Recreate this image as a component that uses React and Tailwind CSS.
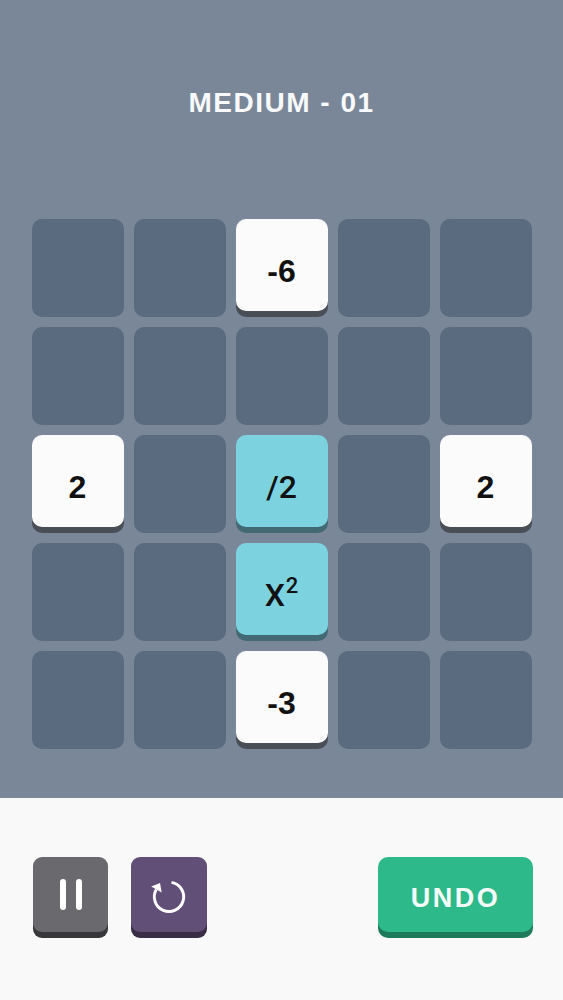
const cells = [
  [null, null, { t: "-6", k: "w" }, null, null],
  [null, null, null, null, null],
  [{ t: "2", k: "w" }, null, { t: "/2", k: "c" }, null, { t: "2", k: "w" }],
  [null, null, { t: "sq", k: "c" }, null, null],
  [null, null, { t: "-3", k: "w" }, null, null],
];

function Tile({ cell }) {
  if (!cell) {
    return <div className="h-[98px] w-[92px] rounded-[10px] bg-[#5a6a7f]" />;
  }
  const face =
    cell.k === "w"
      ? "bg-[#fbfbfc] shadow-[0_6px_0_#4a4e57] font-bold text-[32px]"
      : "bg-[#7dd2df] shadow-[0_6px_0_#436a74] font-medium text-[32px]";
  return (
    <div className="h-[98px] w-[92px]">
      <div
        className={`flex h-[92px] w-[92px] items-center justify-center rounded-[10px] pt-[12px] leading-none text-[#111] ${face}`}
        style={cell.k === "c" ? { fontFamily: 'Roboto, "Liberation Sans", sans-serif' } : undefined}
      >
        {cell.t === "sq" ? (
          <span className="flex items-start leading-none">
            <span className="text-[32px]">X</span>
            <span className="ml-[1px] mt-[-4px] text-[22px]">2</span>
          </span>
        ) : (
          cell.t
        )}
      </div>
    </div>
  );
}

export default function App() {
  return (
    <div
      className="flex h-[1000px] w-[563px] flex-col overflow-hidden"
      style={{ fontFamily: '"Liberation Sans", Arial, sans-serif' }}
    >
      <div className="flex h-[798px] flex-col items-center bg-[#7a8799]">
        <h1 className="mt-[86px] text-[28px] font-bold leading-[34px] tracking-[1.5px] text-[#f8f9fb]">
          MEDIUM - 01
        </h1>
        <div className="mt-[99px] grid grid-cols-[repeat(5,92px)] gap-[10px]">
          {cells.flat().map((c, i) => (
            <Tile key={i} cell={c} />
          ))}
        </div>
      </div>
      <div className="flex flex-1 items-start bg-[#f9f9fa] pl-[33px] pr-[30px] pt-[59px]">
        <button className="flex h-[75px] w-[75px] items-center justify-center gap-[10px] rounded-[9px] bg-[#6a696d] shadow-[0_6px_0_#38373a]">
          <span className="h-[31px] w-[6px] rounded-full bg-white" />
          <span className="h-[31px] w-[6px] rounded-full bg-white" />
        </button>
        <button className="ml-[23px] flex h-[75px] w-[76px] items-center justify-center rounded-[9px] bg-[#624f77] shadow-[0_6px_0_#3a2e47]">
          <svg width="44" height="44" viewBox="0 0 24 24">
            <path
              d="M13.39 5.12 A8 8 0 1 1 5.07 9"
              fill="none"
              stroke="white"
              strokeWidth="1.6"
            />
            <polygon points="7.1,5.5 8.0,10.6 2.3,7.4" fill="white" />
          </svg>
        </button>
        <button className="ml-auto flex h-[75px] w-[155px] items-center justify-center rounded-[10px] bg-[#2eb98b] pt-[8px] text-[27px] font-bold tracking-[2.5px] text-[#f4fbf8] shadow-[0_6px_0_#1d7a5b]">
          UNDO
        </button>
      </div>
    </div>
  );
}
